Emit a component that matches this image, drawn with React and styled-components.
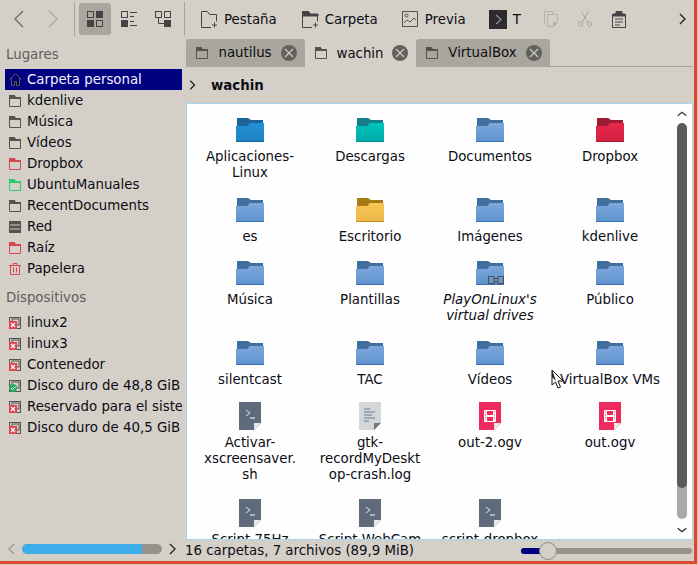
import React from "react";
import styled, { createGlobalStyle } from "styled-components";

const Global = createGlobalStyle`
  html, body { margin: 0; padding: 0; background: #e6c4b4; }
  * { box-sizing: border-box; }
  #root { width: 698px; height: 565px; overflow: hidden; }
`;

const Window = styled.div`
  position: relative;
  width: 697px;
  height: 564px;
  display: grid;
  grid-template-columns: 186px 1fr;
  grid-template-rows: 38px 1fr 21px;
  background: #d4d0c8;
  border-right: 3px solid #d9492f;
  border-bottom: 3px solid #d9492f;
  font-family: "DejaVu Sans", sans-serif;
  font-size: 13.33px;
  color: #0c0c14;
  overflow: hidden;
`;

const Toolbar = styled.div`
  grid-column: 1 / 3;
  display: flex;
  align-items: center;
`;

const ToolIcon = styled.button`
  width: ${p => p.$w || 32}px;
  height: 32px;
  margin-left: ${p => p.$ml || 0}px;
  padding: 0;
  border: 0;
  border-radius: 3px;
  background: ${p => (p.$active ? "#a9a69e" : "transparent")};
  display: flex;
  align-items: center;
  justify-content: center;
  flex: none;
  color: #55534f;
`;

const ToolSep = styled.div`
  width: 1px;
  height: 34px;
  background: #a8a59e;
  margin-left: ${p => p.$ml || 0}px;
  flex: none;
`;

const ToolText = styled.button`
  display: flex;
  align-items: center;
  gap: ${p => p.$gap || 6}px;
  margin-left: ${p => p.$ml}px;
  padding: 0;
  border: 0;
  background: none;
  font: inherit;
  color: inherit;
  flex: none;
  height: 32px;
`;

const Sidebar = styled.aside`
  grid-row: 2 / 4;
  padding: 8px 0 0 5px;
  display: flex;
  flex-direction: column;
  min-width: 0;
  position: relative;
`;

const SectionTitle = styled.div`
  color: #5e5e60;
  height: 23px;
  line-height: 17px;
  padding-left: 1px;
  margin-top: ${p => p.$mt || 0}px;
`;

const Place = styled.div`
  height: 21px;
  width: 177px;
  display: flex;
  align-items: center;
  gap: 5px;
  padding-left: 4px;
  white-space: nowrap;
  overflow: hidden;
  background: ${p => (p.$selected ? "#000080" : "transparent")};
  color: ${p => (p.$selected ? "#f4f4ff" : "inherit")};
  svg { flex: none; }
`;

const SideScroll = styled.div`
  margin-top: auto;
  height: 19px;
  margin-bottom: 3px;
  display: flex;
  align-items: center;
`;

const ScrollTrack = styled.div`
  width: 140px;
  height: 10px;
  border-radius: 5px;
  background: #96938d;
  margin: 0 3px;
  overflow: hidden;
`;

const ScrollFill = styled.div`
  height: 100%;
  background: #3daee9;
  border-radius: 5px 0 0 5px;
`;

const Main = styled.main`
  display: flex;
  flex-direction: column;
  min-height: 0;
  min-width: 0;
`;

const TabBar = styled.div`
  height: 28px;
  display: flex;
  align-items: flex-end;
  margin-top: 1px;
  margin-right: 1px;
  border-bottom: 1px solid #a8a59e;
  flex: none;
`;

const Tab = styled.div`
  width: ${p => p.$w}px;
  margin-bottom: ${p => (p.$active ? -1 : 0)}px;
  height: ${p => (p.$active ? 28 : 27)}px;
  display: flex;
  align-items: center;
  padding-left: 10px;
  padding-right: 8px;
  background: ${p => (p.$active ? "#d4d0c8" : "#a9a69e")};
  border-radius: 3px 3px 0 0;
  flex: none;
`;

const TabLabel = styled.span`
  flex: 1;
  text-align: center;
  white-space: nowrap;
`;

const CloseDot = styled.span`
  width: 16px;
  height: 16px;
  border-radius: 50%;
  background: #63615e;
  display: flex;
  align-items: center;
  justify-content: center;
  flex: none;
`;

const Breadcrumb = styled.div`
  height: 36px;
  flex: none;
  display: flex;
  align-items: center;
  gap: 13px;
  font-weight: 700;
`;

const FileArea = styled.div`
  flex: 1;
  min-height: 0;
  background: #fefefe;
  border: 1px solid #a5d5ee;
  margin-right: 1px;
  display: flex;
  overflow: hidden;
`;

const FileGrid = styled.div`
  flex: 1;
  display: grid;
  grid-template-columns: repeat(4, 120px);
  grid-template-rows: 80px 63px 80px 63px 97px 97px;
  padding: 10px 0 0 3px;
  overflow: hidden;
`;

const FileItem = styled.div`
  display: flex;
  flex-direction: column;
  align-items: center;
  text-align: center;
  line-height: 16px;
`;

const IconBox = styled.div`
  height: 32px;
  display: flex;
  align-items: center;
  justify-content: center;
`;

const FileName = styled.div`
  margin-top: 3px;
  width: 105px;
  font-style: ${p => (p.$italic ? "italic" : "normal")};
`;

const VScroll = styled.div`
  width: 15px;
  flex: none;
  display: flex;
  flex-direction: column;
  align-items: center;
  padding-right: 5px;
`;

const VTrack = styled.div`
  width: 10px;
  height: 396px;
  flex: none;
  border-radius: 5px;
  background: #a9a9a9;
  overflow: hidden;
`;

const VThumb = styled.div`
  width: 100%;
  height: 365px;
  background: #5a5a5a;
  border-radius: 5px;
`;

const ArrowSlot = styled.div`
  height: ${p => p.$h}px;
  flex: none;
  display: flex;
  align-items: center;
  justify-content: center;
`;

const StatusBar = styled.div`
  height: 21px;
  display: flex;
  align-items: center;
  flex: none;
`;

const StatusText = styled.div`
  flex: 1;
  white-space: nowrap;
  margin-left: -1px;
`;

const Zoom = styled.div`
  width: 171px;
  height: 6px;
  border-radius: 3px;
  background: #96938d;
  position: relative;
  margin-right: 2px;
  margin-top: 1px;
`;

const ZoomFill = styled.div`
  height: 100%;
  background: #000080;
  border-radius: 3px 0 0 3px;
`;

const ZoomKnob = styled.div`
  position: absolute;
  top: -6px;
  width: 18px;
  height: 18px;
  border-radius: 50%;
  background: #d4d0c8;
  border: 1px solid #8f8c86;
`;

const Cursor = styled.svg`
  position: absolute;
  left: 551px;
  top: 369px;
`;

/* ---------- icons ---------- */
const Chevron = ({ dir = "right", size = 14, color = "#3a3a3a", w = 1.3 }) => {
  const d = {
    right: "M5 2l5 5-5 5",
    left: "M9 2L4 7l5 5",
    down: "M2 5l5 4 5-4",
    up: "M2 9l5-4 5 4",
  }[dir];
  return (
    <svg width={size} height={size} viewBox="0 0 14 14" fill="none" stroke={color} strokeWidth={w}>
      <path d={d} />
    </svg>
  );
};

const BigChevron = ({ dir, color }) => (
  <svg width="10" height="18" viewBox="0 0 10 18" fill="none" stroke={color} strokeWidth="1.2">
    <path d={dir === "left" ? "M9 1L1 9l8 8" : "M1 1l8 8-8 8"} />
  </svg>
);

const IconsView = () => (
  <svg width="16" height="16" viewBox="0 0 16 16">
    <rect x=".5" y=".5" width="6" height="6" fill="none" stroke="#444" />
    <rect x="9.5" y=".5" width="6" height="6" fill="#444" stroke="#444" />
    <rect x=".5" y="9.5" width="6" height="6" fill="#444" stroke="#444" />
    <rect x="9.5" y="9.5" width="6" height="6" fill="none" stroke="#444" />
  </svg>
);

const CompactView = () => (
  <svg width="16" height="16" viewBox="0 0 16 16" fill="none" stroke="#444">
    <rect x=".5" y=".5" width="6" height="6" />
    <rect x=".5" y="9.5" width="6" height="6" fill="#444" />
    <path d="M9 1.5h7M9 5.5h4M9 10.5h4M9 14.5h7" />
  </svg>
);

const TreeView = () => (
  <svg width="16" height="16" viewBox="0 0 16 16" fill="none" stroke="#444">
    <rect x=".5" y=".5" width="6" height="6" />
    <rect x="9.5" y=".5" width="6" height="6" />
    <rect x="9.5" y="9.5" width="6" height="6" fill="#444" />
    <path d="M3.5 6.5v6h6" />
  </svg>
);

const NewTabIcon = ({ dark }) => (
  <svg width="17" height="17" viewBox="0 0 17 17" fill="none" stroke="#444">
    <path d="M.5 16.5V.5h6l2 3h7v7M10 16.5H.5" />
    {dark && <path d="M0 0h6l2 3h8v2H0z" fill="#444" />}
    <path d="M13.5 11.5v5M11 14h5" />
  </svg>
);

const PreviewIcon = () => (
  <svg width="16" height="16" viewBox="0 0 16 16" fill="none" stroke="#555">
    <rect x=".5" y=".5" width="15" height="15" />
    <circle cx="4.5" cy="4.5" r="1.5" />
    <path d="M2 12l3-3 3 2 4-4 2 2" />
  </svg>
);

const TerminalIcon = () => (
  <svg width="18" height="19" viewBox="0 0 18 19">
    <rect width="18" height="19" fill="#2b2b30" />
    <path d="M7 5l5 4.5L7 14" fill="none" stroke="#9a9a9a" strokeWidth="1.1" />
  </svg>
);

const CopyIcon = () => (
  <svg width="14" height="16" viewBox="0 0 14 16" fill="none" stroke="#b4b2ac">
    <path d="M.5 12.5V.5h8v3" />
    <path d="M3.5 15.5v-12h10v8l-4 4z" />
    <path d="M13 11.500H9.500v3.500z" fill="#b4b2ac" />
  </svg>
);

const CutIcon = () => (
  <svg width="14" height="16" viewBox="0 0 14 16" fill="none" stroke="#a8a6a0">
    <circle cx="2.500" cy="13" r="2.200" />
    <circle cx="11.500" cy="13" r="2.200" />
    <path d="M4 11.500L10.500 .5M10 11.500L3.500 .5" />
  </svg>
);

const PasteIcon = () => (
  <svg width="14" height="17" viewBox="0 0 14 17" fill="none" stroke="#444">
    <rect x=".5" y="3.500" width="13" height="13" />
    <path d="M4 .5h6v3H4z" fill="#444" />
    <path d="M1 3h12v2H1z" fill="#444" />
    <path d="M3 8h8M3 11h8M3 14h5" />
  </svg>
);

const SmallFolder = ({ color = "#55534f" }) => (
  <svg width="13" height="12" viewBox="0 0 13 12" fill="none" stroke={color}>
    <path d="M.5 11.500V.5h5l1 2h5v9z" />
    <path d="M0 0h5.500l1 2H12v2H0z" fill={color} stroke="none" />
  </svg>
);

const HomeIcon = () => (
  <svg width="13" height="13" viewBox="0 0 13 13" fill="none" stroke="#5a5a48">
    <path d="M.5 6.500l6-6 6 6M2.500 5v7.500h3v-4h2v4h3V5" />
  </svg>
);

const NetIcon = () => (
  <svg width="13" height="12" viewBox="0 0 13 12">
    <rect width="12" height="12" fill="#55534f" />
    <path d="M1 4h10M1 8h10" stroke="#d4d0c8" />
  </svg>
);

const TrashIcon = () => (
  <svg width="13" height="12" viewBox="0 0 13 12" fill="none" stroke="#da4453">
    <path d="M0 2.500h12M4 2V.5h4V2M1.500 3v8.500h9V3M4.500 4.500v5M7.500 4.500v5" />
  </svg>
);

const DriveIcon = ({ ok }) => (
  <svg width="13" height="12" viewBox="0 0 13 12">
    <rect x=".5" y=".5" width="11" height="11" fill="#d4d0c8" stroke="#55534f" />
    <rect x="3" y="2" width="7" height="6" fill="none" stroke="#55534f" />
    {ok ? (
      <>
        <circle cx="4" cy="8" r="4" fill="#27ae60" />
        <path d="M2 8l1.500 1.500L6.500 6.500" stroke="#fff" fill="none" />
      </>
    ) : (
      <>
        <rect y="4" width="8" height="8" fill="#da4453" />
        <path d="M2 6l4 4M6 6l-4 4" stroke="#fff" strokeWidth="1.300" />
      </>
    )}
  </svg>
);

const Close = () => (
  <svg width="10" height="10" viewBox="0 0 10 10" stroke="#c8c6c0" strokeWidth="1.300">
    <path d="M1 1l8 8M9 1L1 9" />
  </svg>
);

const FOLDER_COLORS = {
  blue: ["#41709f", "#7aa8dc", "#5f92cc", "#3a72b4"],
  azure: ["#1d6498", "#2391d6", "#1f7fc0", "#17669e"],
  teal: ["#147f88", "#00c4bc", "#00aaa8", "#0b8d8d"],
  red: ["#9c1c33", "#e8264c", "#d21f42", "#a61c36"],
  yellow: ["#a87a15", "#f8c654", "#ecb64a", "#c78f24"],
};

const Folder = ({ tone = "blue", link }) => {
  const [back, top, bottom, edge] = FOLDER_COLORS[tone];
  const id = `folder-${tone}`;
  return (
    <svg width="28" height="24" viewBox="0 0 28 24">
      <defs>
        <linearGradient id={id} x1="0" y1="0" x2="0" y2="1">
          <stop offset="0" stopColor={top} />
          <stop offset="1" stopColor={bottom} />
        </linearGradient>
      </defs>
      <path d="M1 0h11l3 2h12v6H1z" fill={back} />
      <path d="M0 8h11l3-3h14v19H0z" fill={`url(#${id})`} />
      <rect y="23" width="28" height="1" fill={edge} />
      {link && (
        <path d="M12.500 15.500h5.500v7h-5.500zM22 15.500h5.500v7H22zM18 17.500h4M18 20.500h4" fill="none" stroke="#55534f" strokeWidth="1.200" />
      )}
    </svg>
  );
};

const Script = () => (
  <svg width="22" height="28" viewBox="0 0 22 28">
    <path d="M0 0h22v21l-7 7H0z" fill="#5f6b7a" />
    <path d="M15 28v-7h7z" fill="#e8e8e8" />
    <path d="M7 8l4 3-4 3" fill="none" stroke="#dfe3e8" />
    <path d="M11 16h5" stroke="#fff" />
  </svg>
);

const LogFile = () => (
  <svg width="22" height="28" viewBox="0 0 22 28">
    <path d="M0 0h22v21l-7 7H0z" fill="#d4d7d9" />
    <path d="M15 28v-7h7z" fill="#70767c" />
    <path d="M5 7h6M5 10h11M5 13h8M5 16h11M5 19h5" stroke="#6d7c8c" />
  </svg>
);

const VideoFile = () => (
  <svg width="22" height="28" viewBox="0 0 22 28">
    <path d="M0 0h22v21l-7 7H0z" fill="#ee2a5e" />
    <path d="M15 28v-7h7z" fill="#f4e8e0" />
    <rect x="5" y="8" width="12" height="12" rx="1" fill="#fff" />
    <path d="M8 9h6v4H8zM8 15h6v4H8z" fill="#ee2a5e" />
    <path d="M6 10h1M6 13h1M6 16h1M15 10h1M15 13h1M15 16h1" stroke="#ee2a5e" />
  </svg>
);

const places = [
  { label: "Carpeta personal", icon: <HomeIcon />, selected: true },
  { label: "kdenlive", icon: <SmallFolder /> },
  { label: "Música", icon: <SmallFolder /> },
  { label: "Vídeos", icon: <SmallFolder /> },
  { label: "Dropbox", icon: <SmallFolder color="#da4453" /> },
  { label: "UbuntuManuales", icon: <SmallFolder color="#2ecc71" /> },
  { label: "RecentDocuments", icon: <SmallFolder /> },
  { label: "Red", icon: <NetIcon /> },
  { label: "Raíz", icon: <SmallFolder color="#da4453" /> },
  { label: "Papelera", icon: <TrashIcon /> },
];

const devices = [
  { label: "linux2" },
  { label: "linux3" },
  { label: "Contenedor" },
  { label: "Disco duro de 48,8 GiB", ok: true },
  { label: "Reservado para el siste" },
  { label: "Disco duro de 40,5 GiB" },
];

const files = [
  ["Aplicaciones-Linux", <Folder tone="azure" />],
  ["Descargas", <Folder tone="teal" />],
  ["Documentos", <Folder />],
  ["Dropbox", <Folder tone="red" />],
  ["es", <Folder />],
  ["Escritorio", <Folder tone="yellow" />],
  ["Imágenes", <Folder />],
  ["kdenlive", <Folder />],
  ["Música", <Folder />],
  ["Plantillas", <Folder />],
  ["PlayOnLinux's virtual drives", <Folder link />, true],
  ["Público", <Folder />],
  ["silentcast", <Folder />],
  ["TAC", <Folder />],
  ["Vídeos", <Folder />],
  ["VirtualBox VMs", <Folder />],
  ["Activar-xscreensaver.\u200Bsh", <Script />],
  ["gtk-recordMyDeskt\u200Bop-crash.log", <LogFile />],
  ["out-2.ogv", <VideoFile />],
  ["out.ogv", <VideoFile />],
  ["Script 75Hz", <Script />],
  ["Script WebCam", <Script />],
  ["script-dropbox", <Script />],
];

export default function App() {
  return (
    <Window>
      <Global />
      <Toolbar>
        <ToolIcon $ml={3}><BigChevron dir="left" color="#666" /></ToolIcon>
        <ToolIcon $ml={2}><BigChevron dir="right" color="#a8a59e" /></ToolIcon>
        <ToolSep $ml={5} />
        <ToolIcon $active $ml={4}><IconsView /></ToolIcon>
        <ToolIcon $ml={2}><CompactView /></ToolIcon>
        <ToolIcon $ml={2}><TreeView /></ToolIcon>
        <ToolSep $ml={5} />
        <ToolText $ml={16}><NewTabIcon />Pestaña</ToolText>
        <ToolText $ml={25}><NewTabIcon dark />Carpeta</ToolText>
        <ToolText $ml={24} $gap={7}><PreviewIcon />Previa</ToolText>
        <ToolText $ml={23}><TerminalIcon />T</ToolText>
        <ToolIcon $w={14} $ml={23}><CopyIcon /></ToolIcon>
        <ToolIcon $w={14} $ml={20}><CutIcon /></ToolIcon>
        <ToolIcon $w={14} $ml={20}><PasteIcon /></ToolIcon>
        <ToolIcon $w={14} $ml={49}><Chevron dir="right" size={14} color="#222" w={1.4} /></ToolIcon>
      </Toolbar>

      <Sidebar>
        <SectionTitle>Lugares</SectionTitle>
        {places.map(p => (
          <Place key={p.label} $selected={p.selected}>
            {p.icon}
            <span>{p.label}</span>
          </Place>
        ))}
        <SectionTitle $mt={10}>Dispositivos</SectionTitle>
        {devices.map(d => (
          <Place key={d.label}>
            <DriveIcon ok={d.ok} />
            <span>{d.label}</span>
          </Place>
        ))}
        <SideScroll>
          <Chevron dir="left" size={14} color="#9a9892" />
          <ScrollTrack><ScrollFill style={{ width: `${(120 / 140) * 100}%` }} /></ScrollTrack>
          <Chevron dir="right" size={14} color="#222" />
        </SideScroll>
      </Sidebar>

      <Main>
        <TabBar>
          <Tab $w={119}><SmallFolder /><TabLabel>nautilus</TabLabel><CloseDot><Close /></CloseDot></Tab>
          <Tab $w={111} $active><SmallFolder /><TabLabel>wachin</TabLabel><CloseDot><Close /></CloseDot></Tab>
          <Tab $w={134}><SmallFolder /><TabLabel>VirtualBox</TabLabel><CloseDot><Close /></CloseDot></Tab>
        </TabBar>
        <Breadcrumb>
          <Chevron dir="right" size={12} color="#222" w={1.5} />
          <span>wachin</span>
        </Breadcrumb>
        <FileArea>
          <FileGrid>
            {files.map(([name, icon, italic]) => (
              <FileItem key={name}>
                <IconBox>{icon}</IconBox>
                <FileName $italic={italic}>{name}</FileName>
              </FileItem>
            ))}
          </FileGrid>
          <VScroll>
            <ArrowSlot $h={19}><Chevron dir="up" size={12} color="#333" /></ArrowSlot>
            <VTrack><VThumb /></VTrack>
            <ArrowSlot $h={21}><Chevron dir="down" size={12} color="#222" /></ArrowSlot>
          </VScroll>
        </FileArea>
      </Main>

      <StatusBar>
        <StatusText>16 carpetas, 7 archivos (89,9 MiB)</StatusText>
        <Zoom>
          <ZoomFill style={{ width: "19px" }} />
          <ZoomKnob style={{ left: "18px" }} />
        </Zoom>
      </StatusBar>

      <Cursor width="13" height="20" viewBox="0 0 13 20">
        <path d="M1 1v15l3.500-3 2.500 6 2.500-1-2.500-6h5z" fill="#fff" stroke="#111" />
        <path d="M1 1v7l4 4z" fill="#222" />
      </Cursor>
    </Window>
  );
}
